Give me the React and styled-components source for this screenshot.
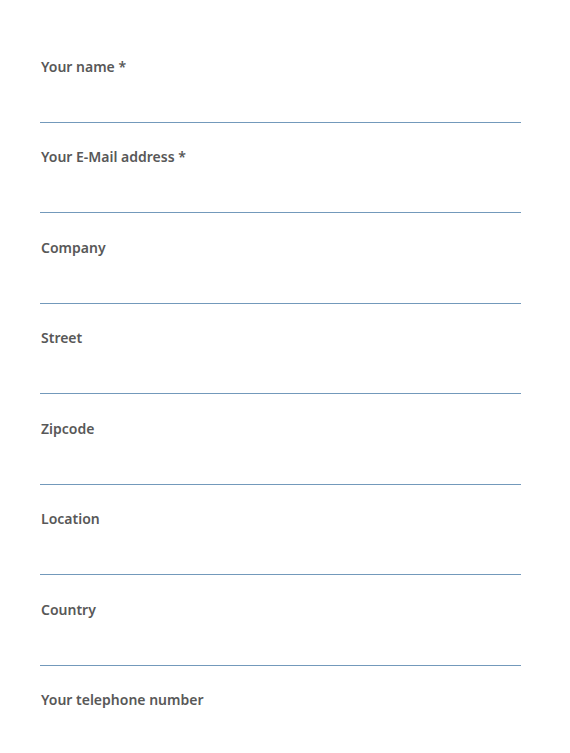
import React from 'react'
import styled, { createGlobalStyle } from 'styled-components'

const GlobalStyle = createGlobalStyle`
  html, body {
    margin: 0;
    padding: 0;
    background: #ffffff;
  }
  body {
    font-family: 'Noto Sans', 'Liberation Sans', sans-serif;
  }
`

const Form = styled.form`
  display: flex;
  flex-direction: column;
  gap: 23px;
  padding: 56px 49px 0 40px;
`

const Field = styled.div`
  display: flex;
  flex-direction: column;

  &:nth-child(odd):not(:first-child) {
    margin-top: 1px;
  }
`

const Label = styled.label`
  color: #585858;
  font-size: 14px;
  font-weight: 600;
  line-height: 20px;
  padding: 1px 0 0 1px;
`

const Input = styled.input`
  border: 0;
  border-bottom: 1px solid #7399bb;
  background: transparent;
  height: 46px;
  padding: 0;
  font: inherit;
  outline: none;
  box-sizing: border-box;
  width: 100%;
`

const fields = [
  { name: 'name', label: 'Your name *' },
  { name: 'email', label: 'Your E-Mail address *' },
  { name: 'company', label: 'Company' },
  { name: 'street', label: 'Street' },
  { name: 'zipcode', label: 'Zipcode' },
  { name: 'location', label: 'Location' },
  { name: 'country', label: 'Country' },
  { name: 'phone', label: 'Your telephone number' },
]

const App = () => (
  <>
    <GlobalStyle />
    <Form>
      {fields.map((item) => (
        <Field key={item.name}>
          <Label htmlFor={item.name}>{item.label}</Label>
          <Input id={item.name} name={item.name} type="text" />
        </Field>
      ))}
    </Form>
  </>
)

export default App
